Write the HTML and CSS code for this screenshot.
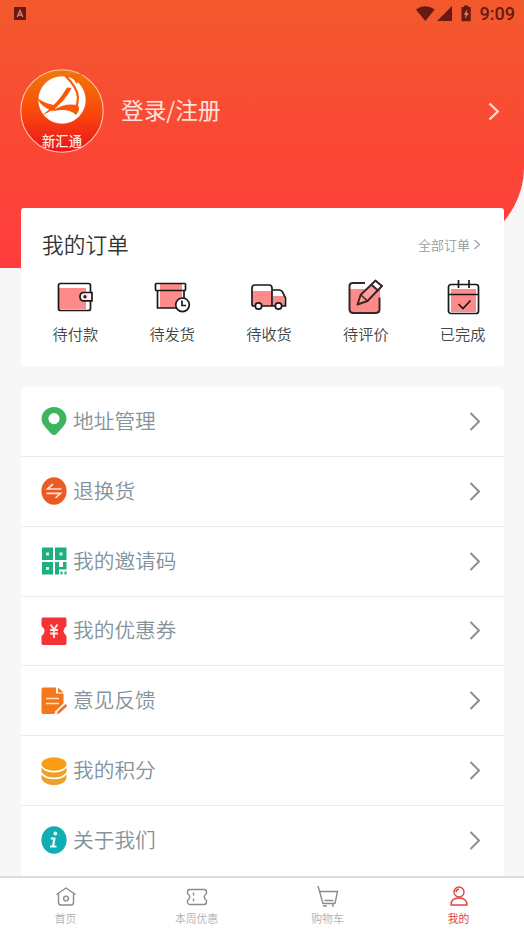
FILE: index.html
```html
<!DOCTYPE html>
<html lang="zh-CN">
<head>
<meta charset="utf-8">
<title>我的</title>
<link rel="stylesheet" href="styles.css">
</head>
<body>
<div class="screen">
  <header class="hero">
    <div class="status">
      <svg class="app-badge" width="12" height="13" viewBox="0 0 12 13"><rect width="12" height="13" rx="1" fill="#651b11"/><path d="M3.2 10 6 3.5 8.8 10M4.2 8h3.6" fill="none" stroke="#dc826d" stroke-width="1.3"/></svg>
      <div class="status-right">
        <svg width="56" height="18" viewBox="0 0 56 18" fill="#651b11"><path d="M0 4.5Q9.300-2 18.700 4.500L9.300 16Z"/><path d="M36 1V16H21Z"/><path d="M45.500 2H48V.5h4V2h2.700v14.200h-9.200Z"/><path d="M51.500 4 47.700 9.700h2.100L49 14l3.900-6h-2.300Z" fill="#f07a5d"/></svg>
        <span class="clock">9:09</span>
      </div>
    </div>
    <div class="profile">
      <svg class="avatar" width="84" height="84" viewBox="0 0 84 84">
        <defs><linearGradient id="av" x1="0" y1="0" x2="0" y2="1"><stop offset="0" stop-color="#ef7a08"/><stop offset=".5" stop-color="#fa4a0b"/><stop offset="1" stop-color="#e91220"/></linearGradient></defs>
        <circle cx="42" cy="42" r="41.200" fill="url(#av)" stroke="#ffc3a5" stroke-width="1.100"/>
        <circle cx="42" cy="31" r="23.700" fill="#fff"/>
        <path d="M49 6Q53 8 56.500 15L59 11L62 5Z" fill="#f4680a"/>
        <path d="M45.500 7Q57 18 58 28Q58 34 55.500 40" fill="none" stroke="#f8590b" stroke-width="2.200"/>
        <path d="M17 29Q27 36 38 36.500L33 42Q22 39 17 29Z" fill="#f8590b"/>
        <path d="M34 40.500Q47 33 58 36.500Q61 40 56 46Q49 39 34 42Z" fill="#f8590b"/>
        <path d="M51.500 19Q43 37 22 46.500Q39 33 47 18.500Z" fill="#f8590b"/>
      </svg>
      <span class="avatar-text">新汇通</span>
      <span class="login">登录/注册</span>
      <svg class="go" width="12" height="19" viewBox="0 0 12 19"><path d="m1.500 1.500 8.300 8-8.300 8" fill="none" stroke="#ffe0d5" stroke-width="2.300"/></svg>
    </div>
  </header>

  <main>
    <section class="card orders">
      <div class="orders-head"><h2>我的订单</h2><div class="all">全部订单<svg width="8" height="11" viewBox="0 0 8 11"><path d="m1.500 1 5 4.500-5 4.500" fill="none" stroke="#999" stroke-width="1.100"/></svg></div></div>
      <div class="order-list">
        <div class="order"><svg width="38" height="38" viewBox="0 0 38 38"><path d="M3 10h27v21H3z" fill="#ff8a8a"/><g fill="none" stroke="#191919" stroke-width="1.700"><rect x="2.500" y="5.500" width="32" height="27" rx="2"/><path d="M36 14.500H28q-4 0-4 4.200t4 4.200h8Z" fill="#ffeded"/></g><circle cx="29" cy="18.800" r="1.700" fill="#222"/></svg><span>待付款</span></div>
        <div class="order"><svg width="38" height="38" viewBox="0 0 38 38"><path d="M7 6h22v24H7z" fill="#ff8a8a"/><g fill="none" stroke="#191919" stroke-width="1.700"><rect x="2.500" y="5.500" width="30" height="7" rx=".8"/><path d="M4.500 12.500V30h20M31 12.500V20"/><circle cx="29.500" cy="26.800" r="6.800" fill="#fff"/><path d="M29 22.500v5h4"/></g></svg><span>待发货</span></div>
        <div class="order"><svg width="38" height="38" viewBox="0 0 38 38"><path d="M3 13h19v15H3zm20 5h11l1 10H23z" fill="#ff8a8a"/><g fill="none" stroke="#191919" stroke-width="1.700"><path d="M5 28H3.500Q2 28 2 26V10q0-3 3-3h14q3 0 3 3v18H12M22 12h7q3 0 4 3l2.500 5v8H32M22 28h3"/><circle cx="8.500" cy="28" r="3.200" fill="#fff"/><circle cx="28.500" cy="28" r="3.200" fill="#fff"/></g></svg><span>待收货</span></div>
        <div class="order"><svg width="38" height="38" viewBox="0 0 38 38"><path d="M3 11h30v24H3z" fill="#ff8a8a"/><path d="M18 5H6Q2.500 5 2.500 8v23q0 4 4 4h22q4 0 4-4V19.500" fill="none" stroke="#3c2525" stroke-width="2"/><path d="m10.500 26.500 3.200-9.700L28.500 2.700 34.800 8 20.500 23Z" fill="#ff9d9d" stroke="#3c2525" stroke-width="1.900" stroke-linejoin="round"/><path d="m28.500 2.700-4 4 6.300 5.600 4-4.300Z" fill="#fff" stroke="#3c2525" stroke-width="1.900"/><path d="m14 17 6.500 6" stroke="#3c2525" stroke-width="1.500"/></svg><span>待评价</span></div>
        <div class="order"><svg width="38" height="38" viewBox="0 0 38 38"><path d="M7 11h25v23H7z" fill="#ff8a8a"/><g fill="none" stroke="#191919" stroke-width="1.700"><rect x="4.500" y="6.500" width="30" height="29" rx="2.500"/><path d="M4.500 16.500h30M14.500 2v8M25 2v8M14.500 26l4.500 4.500 7.500-8"/></g></svg><span>已完成</span></div>
      </div>
    </section>

    <section class="card menu">
      <div class="row"><svg class="mi" viewBox="0 0 26 28"><path fill-rule="evenodd" d="M13 0C6 0 .5 5 .5 12 .5 17 5 21 10 26.500Q13 29.500 16 26.500C21 21 25.500 17 25.500 12 25.500 5 20 0 13 0Zm0 6a5.600 5.600 0 1 1 0 11.200A5.600 5.600 0 0 1 13 6Z" fill="#3eb45e"/></svg><span>地址管理</span><svg class="arrow" viewBox="0 0 12 19"><path d="m1.500 1 8.500 8.500-8.500 8.500"/></svg></div>
      <div class="row"><svg class="mi" viewBox="0 0 26 28"><ellipse cx="13" cy="14" rx="12.600" ry="13.800" fill="#e95b25"/><path d="M20.500 12H6.500L12 7M5.500 16.300h14L14.500 21" fill="none" stroke="#ffe0cf" stroke-width="1.700"/></svg><span>退换货</span><svg class="arrow" viewBox="0 0 12 19"><path d="m1.500 1 8.500 8.500-8.500 8.500"/></svg></div>
      <div class="row"><svg class="mi" viewBox="0 0 26 28"><path d="M1 .5h11V13H1zM14 .5h11.500V13H14zM1 15h11v12.500H1zM14 15h4v5h4v-5h3.500v7.500H18v5h-4zM19.500 24.500h2v3h-2zm4 0h2v3h-2z" fill="#1fae7c"/><path d="M5 5.500h3v3H5zm13.500 0h3v3h-3zM5 20h3v3H5z" fill="#c9f4e3"/></svg><span>我的邀请码</span><svg class="arrow" viewBox="0 0 12 19"><path d="m1.500 1 8.500 8.500-8.500 8.500"/></svg></div>
      <div class="row"><svg class="mi" viewBox="0 0 26 28"><path d="M2 .5h22q1.500 0 1.500 2V9q-6 4.500 0 10v7q0 2-1.500 2H2Q.5 28 .5 26v-7q6-5 0-10V2.500Q.5.5 2 .5Z" fill="#f43334"/><path d="m9.500 7.500 3.500 5 3.500-5M13 12.500V21M9 13h8M9 16.500h8" fill="none" stroke="#ffe4e0" stroke-width="1.900"/></svg><span>我的优惠券</span><svg class="arrow" viewBox="0 0 12 19"><path d="m1.500 1 8.500 8.500-8.500 8.500"/></svg></div>
      <div class="row"><svg class="mi" viewBox="0 0 26 28"><path d="M2 .5h13v6h7.500V17L13 27H2Q.5 27 .5 25V2.500Q.5.5 2 .5ZM17 .5l5.500 5H17Z" fill="#f57818"/><path d="M5 11.500h13M5 16.500h13" stroke="#ffe2c6" stroke-width="1.600"/><path d="m15.500 26.500 9.500-9" stroke="#fff" stroke-width="5"/><path d="m15.500 27.500 1.500-3.500 7.500-7 1.800 2-7.500 7Z" fill="#e87526"/></svg><span>意见反馈</span><svg class="arrow" viewBox="0 0 12 19"><path d="m1.500 1 8.500 8.500-8.500 8.500"/></svg></div>
      <div class="row"><svg class="mi" viewBox="0 0 26 28"><ellipse cx="13" cy="7" rx="12.500" ry="6.700" fill="#fa9d15"/><path d="M.5 10.500Q4 15.500 13 15.500t12.500-5v4.500Q22 20.500 13 20.500T.5 15ZM.5 17.500Q4 22.300 13 22.300t12.500-4.800V22Q22 28 13 28T.5 22Z" fill="#eda026"/></svg><span>我的积分</span><svg class="arrow" viewBox="0 0 12 19"><path d="m1.500 1 8.500 8.500-8.500 8.500"/></svg></div>
      <div class="row"><svg class="mi" viewBox="0 0 26 28"><ellipse cx="13" cy="14" rx="12.600" ry="13.700" fill="#10adb3"/><circle cx="14.300" cy="7.500" r="1.900" fill="#e5ffff"/><path d="M9.800 12.500h3.600L12 20.500h3.500M9 20.500h4" fill="none" stroke="#e5ffff" stroke-width="2.200"/></svg><span>关于我们</span><svg class="arrow" viewBox="0 0 12 19"><path d="m1.500 1 8.500 8.500-8.500 8.500"/></svg></div>
    </section>
  </main>

  <nav class="tabs">
    <div class="tab"><svg viewBox="0 0 22 22"><path d="M1.500 8.500 11 2l9.500 6.500M3.500 7.500v9q0 2.500 2.500 2.500h10q2.500 0 2.500-2.500v-9"/><circle cx="11" cy="12.500" r="2.400"/></svg><span>首页</span></div>
    <div class="tab"><svg viewBox="0 0 22 22"><path d="M4 3.500h14q2.500 0 2.500 2.500v1.500q-4.500 3.500 0 7V16q0 2.500-2.500 2.500H4q-2.500 0-2.500-2.500v-1.500q4.500-3.500 0-7V6q0-2.500 2.500-2.500Z"/><path d="M7.500 6.500v3m0 3v3"/></svg><span>本周优惠</span></div>
    <div class="tab"><svg viewBox="0 0 22 22"><path d="M1 0 6 17.500h12M2.500 5.500h18L18 17.500M7.500 14.500h9"/><path d="M6 20h4m6-2v3"/></svg><span>购物车</span></div>
    <div class="tab active"><svg viewBox="0 0 22 22"><circle cx="11" cy="6" r="5"/><path d="M8 6q0-2.500 3-3M3 19q0-7 8-7t8 7Z"/></svg><span>我的</span></div>
  </nav>
</div>
</body>
</html>
```
FILE: styles.css
```css
* { box-sizing: border-box; }
body {
  margin: 0;
  font-family: "Noto Sans CJK SC", sans-serif;
  font-weight: 350;
  background: #f7f7f7;
}
svg { display: block; flex: none; }
.screen {
  width: 524px;
  height: 932px;
  display: flex;
  flex-direction: column;
  overflow: hidden;
}
.hero {
  flex: none;
  height: 268px;
  background: linear-gradient(#f3592d, #fa4935 50%, #ff3c3e);
  border-bottom-right-radius: 130px 100px;
}
.status {
  height: 27px;
  padding: 0 9px 0 14px;
  display: flex;
  align-items: center;
  justify-content: space-between;
}
.status-right { display: flex; align-items: center; gap: 8px; }
.clock {
  font: 500 18px/27px Roboto, sans-serif;
  color: #651b11;
}
.profile {
  position: relative;
  margin-top: 42px;
  padding: 0 24px 0 20px;
  display: flex;
  align-items: center;
}
.avatar-text {
  position: absolute;
  left: 20px;
  top: 63px;
  width: 84px;
  text-align: center;
  font-size: 13.3px;
  line-height: 18px;
  font-weight: 500;
  color: #ffece3;
}
.login {
  margin: -3px 0 0 17px;
  font-size: 22.7px;
  font-weight: 400;
  line-height: 34px;
  color: #ffe2db;
}
.go { margin-left: auto; }
main {
  flex: 1;
  min-height: 0;
  margin-top: -60px;
  padding: 0 20px 0 21px;
  overflow: hidden;
}
.card { background: #fff; border-radius: 3px; }
.orders { height: 158px; margin-bottom: 21px; }
.orders-head {
  height: 68px;
  padding: 5px 23px 0 21px;
  display: flex;
  align-items: center;
  justify-content: space-between;
}
h2 {
  margin: -2px 0 0;
  font-size: 21.7px;
  font-weight: 350;
  color: #333;
}
.all {
  display: flex;
  align-items: center;
  gap: 3px;
  font-size: 13px;
  color: #999;
}
.order-list {
  margin: 0 -7px 0 6px;
  padding-top: 2px;
  display: grid;
  grid-template-columns: repeat(5, 1fr);
}
.order {
  display: flex;
  flex-direction: column;
  align-items: center;
  gap: 5px;
  font-size: 15.2px;
  line-height: 24px;
  color: #444;
}
.menu { border-radius: 5px 5px 0 0; }
.row {
  height: 69.85px;
  padding: 0 23px 0 20px;
  display: flex;
  align-items: center;
  border-bottom: 1px solid #ebebeb;
}
.row:last-child { border-bottom-color: transparent; }
.row span {
  margin: -3px 0 0 6px;
  font-size: 20.7px;
  line-height: 30px;
  color: #84939b;
}
.mi { width: 26px; height: 28px; }
.arrow {
  width: 12px;
  height: 19px;
  margin-left: auto;
  fill: none;
  stroke: #888e92;
  stroke-width: 2;
}
.tabs {
  flex: none;
  height: 56px;
  border-top: 2px solid #dcdcdc;
  background: #fff;
  display: grid;
  grid-template-columns: repeat(4, 1fr);
}
.tab {
  padding-top: 8px;
  display: flex;
  flex-direction: column;
  align-items: center;
  gap: 2px;
  font-size: 10.8px;
  line-height: 16px;
  color: #b0b0b0;
}
.tab svg {
  width: 22px;
  height: 22px;
  fill: none;
  stroke: #8b8b8b;
  stroke-width: 1.4;
}
.tab.active { color: #e14545; font-weight: 400; }
.tab.active svg { stroke: #dd4545; }
```
